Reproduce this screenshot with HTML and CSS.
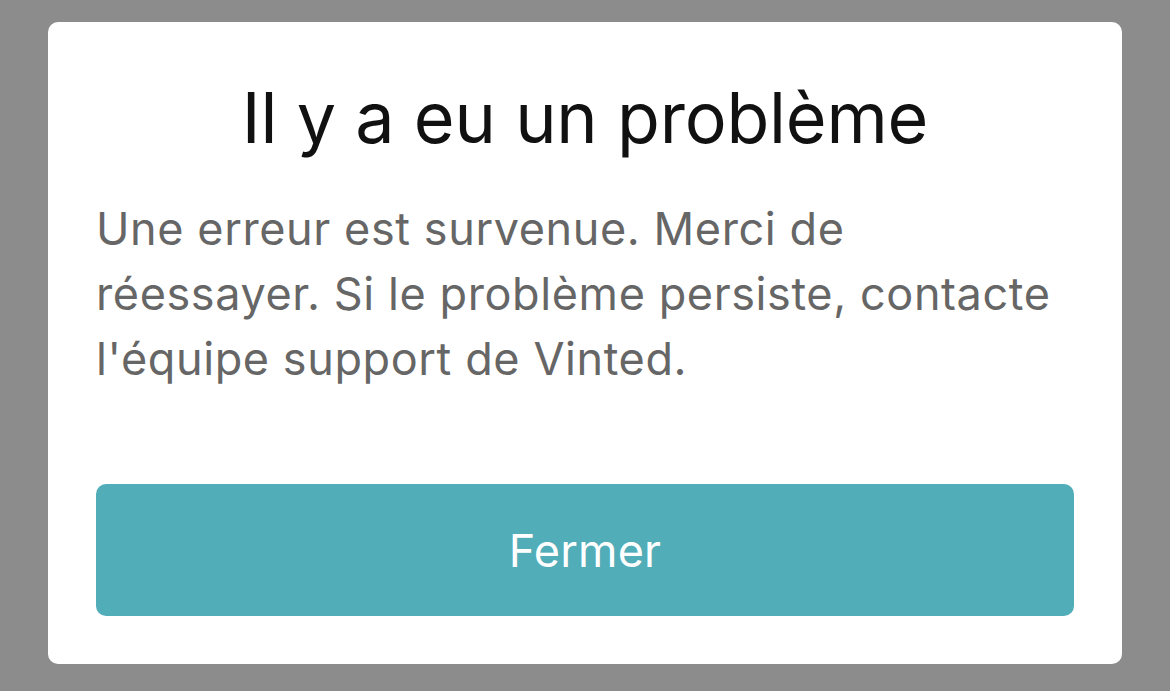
FILE: index.html
```html
<!DOCTYPE html>
<html lang="fr">
<head>
<meta charset="utf-8">
<link rel="stylesheet" href="styles.css">
</head>
<body>
<div class="overlay">
  <div class="dialog">
    <h1 class="title">Il y a eu un problème</h1>
    <p class="message">Une erreur est survenue. Merci de réessayer. Si le problème persiste, contacte l'équipe support de Vinted.</p>
    <button class="btn">Fermer</button>
  </div>
</div>
</body>
</html>
```
FILE: styles.css
```css
html, body {
  margin: 0;
  padding: 0;
  height: 100%;
}
body {
  background: #8c8c8c;
  font-family: Inter, "Noto Sans", sans-serif;
}
.overlay {
  padding: 22px 48px 27px 48px;
  box-sizing: border-box;
  height: 100%;
}
.dialog {
  background: #fff;
  border-radius: 10px;
  padding: 56px 48px 48px 48px;
  height: 100%;
  box-sizing: border-box;
  display: flex;
  flex-direction: column;
}
.title {
  margin: 0;
  font-size: 70px;
  font-weight: 400;
  line-height: 80px;
  letter-spacing: -0.2px;
  color: #111;
  text-align: center;
}
.message {
  margin: 38px 0 0 0;
  font-size: 45px;
  line-height: 65px;
  letter-spacing: 0.6px;
  color: #666;
  flex: 1;
}
.btn {
  height: 132px;
  border: none;
  border-radius: 10px;
  background: #51adb8;
  color: #fff;
  font-family: inherit;
  font-size: 45px;
  letter-spacing: 0.2px;
  width: 100%;
  padding: 0;
}
```
